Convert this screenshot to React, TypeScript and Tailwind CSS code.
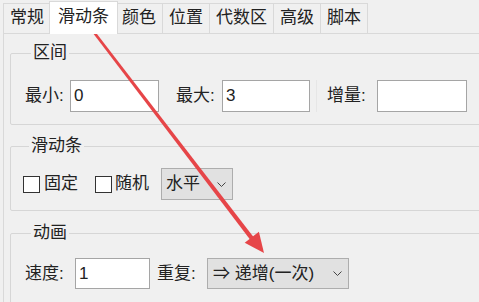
const tabs = ["常规", "滑动条", "颜色", "位置", "代数区", "高级", "脚本"];
const font = { fontFamily: '"Liberation Sans", "Noto Sans CJK SC", sans-serif' };

function Chevron() {
  return (
    <svg width="9" height="5" viewBox="0 0 9 5" className="shrink-0">
      <path d="M0.5 0.5 L4.5 4.5 L8.5 0.5" fill="none" stroke="#444" strokeWidth="1" />
    </svg>
  );
}

function Check({ label, width }: { label: string; width: string }) {
  return (
    <>
      <span className="w-[17px] h-[17px] border border-[#333] bg-white shrink-0" />
      <span className={`ml-[4px] ${width}`}>{label}</span>
    </>
  );
}

export default function App() {
  return (
    <div
      className="relative w-[479px] h-[302px] overflow-hidden bg-[#f0f0f0] text-[17px] text-[#222]"
      style={font}
    >
      {/* tab strip */}
      <div className="relative z-10 flex items-start h-[33px] pl-[3px]">
        {tabs.map((t, i) =>
          i === 1 ? (
            <div
              key={t}
              className="relative z-10 -mx-[2px] mt-[1px] h-[33px] px-[8px] bg-white border border-b-0 border-[#d9d9d9] leading-[30px]"
            >
              {t}
            </div>
          ) : (
            <div
              key={t}
              className={`mt-[3px] h-[30px] px-[6px] border-t border-r border-[#d9d9d9] leading-[28px] bg-[#f0f0f0] ${
                i === 0 ? "border-l" : ""
              }`}
            >
              {t}
            </div>
          )
        )}
      </div>

      {/* panel */}
      <div className="ml-[3px] w-[520px] h-[280px] border-l border-t border-[#d9d9d9] pl-[6px] pt-[8px]">
        <fieldset className="border border-[#d6d6d6] rounded-[2px] pt-[16px] pb-[12px] pl-[14px]">
          <legend className="ml-[6px] px-[2px] leading-[22px]">区间</legend>
          <div className="flex items-center">
            <span className="w-[45px]">最小:</span>
            <div className="w-[89px] h-[32px] bg-white border border-[#a5a5a5] pl-[3px] leading-[30px]">0</div>
            <span className="ml-[17px] w-[46px]">最大:</span>
            <div className="w-[88px] h-[32px] bg-white border border-[#a5a5a5] pl-[3px] leading-[30px]">3</div>
            <span className="ml-[6px] w-px h-[32px] bg-[#e6e6e6]" />
            <span className="ml-[10px] w-[50px]">增量:</span>
            <div className="w-[90px] h-[32px] bg-white border border-[#a5a5a5]" />
          </div>
        </fieldset>

        <fieldset className="mt-[10px] border border-[#d6d6d6] rounded-[2px] pt-[11px] pb-[10px] pl-[12px]">
          <legend className="ml-[6px] px-[2px] leading-[22px]">滑动条</legend>
          <div className="flex items-center">
            <Check label="固定" width="w-[51px]" />
            <span className="w-[17px] h-[17px] border border-[#333] bg-white shrink-0" />
            <span className="ml-[3px] w-[46px]">随机</span>
            <div className="w-[72px] h-[32px] bg-[#e1e1e1] border border-[#adadad] flex items-center justify-between pl-[4px] pr-[6px]">
              <span>水平</span>
              <Chevron />
            </div>
          </div>
        </fieldset>

        <fieldset className="mt-[11px] border border-[#d6d6d6] rounded-[2px] pt-[14px] pb-[14px] pl-[14px]">
          <legend className="ml-[6px] px-[2px] leading-[22px]">动画</legend>
          <div className="flex items-center">
            <span className="w-[50px]">速度:</span>
            <div className="w-[75px] h-[31px] bg-white border border-[#a5a5a5] pl-[3px] leading-[29px]">1</div>
            <span className="ml-[7px] w-[50px]">重复:</span>
            <div className="w-[142px] h-[31px] bg-[#e1e1e1] border border-[#adadad] flex items-center justify-between pl-[5px] pr-[6px]">
              <span>⇒ 递增(一次)</span>
              <Chevron />
            </div>
          </div>
        </fieldset>
      </div>

      {/* annotation arrow */}
      <svg
        className="absolute inset-0 pointer-events-none"
        width="479"
        height="302"
        viewBox="0 0 479 302"
      >
        <polygon points="86,24 88.5,23 253.5,237 250,239.5" fill="#e64548" />
        <polygon points="264,253 244.7,242.7 258.9,231.7" fill="#e64548" />
      </svg>
    </div>
  );
}
